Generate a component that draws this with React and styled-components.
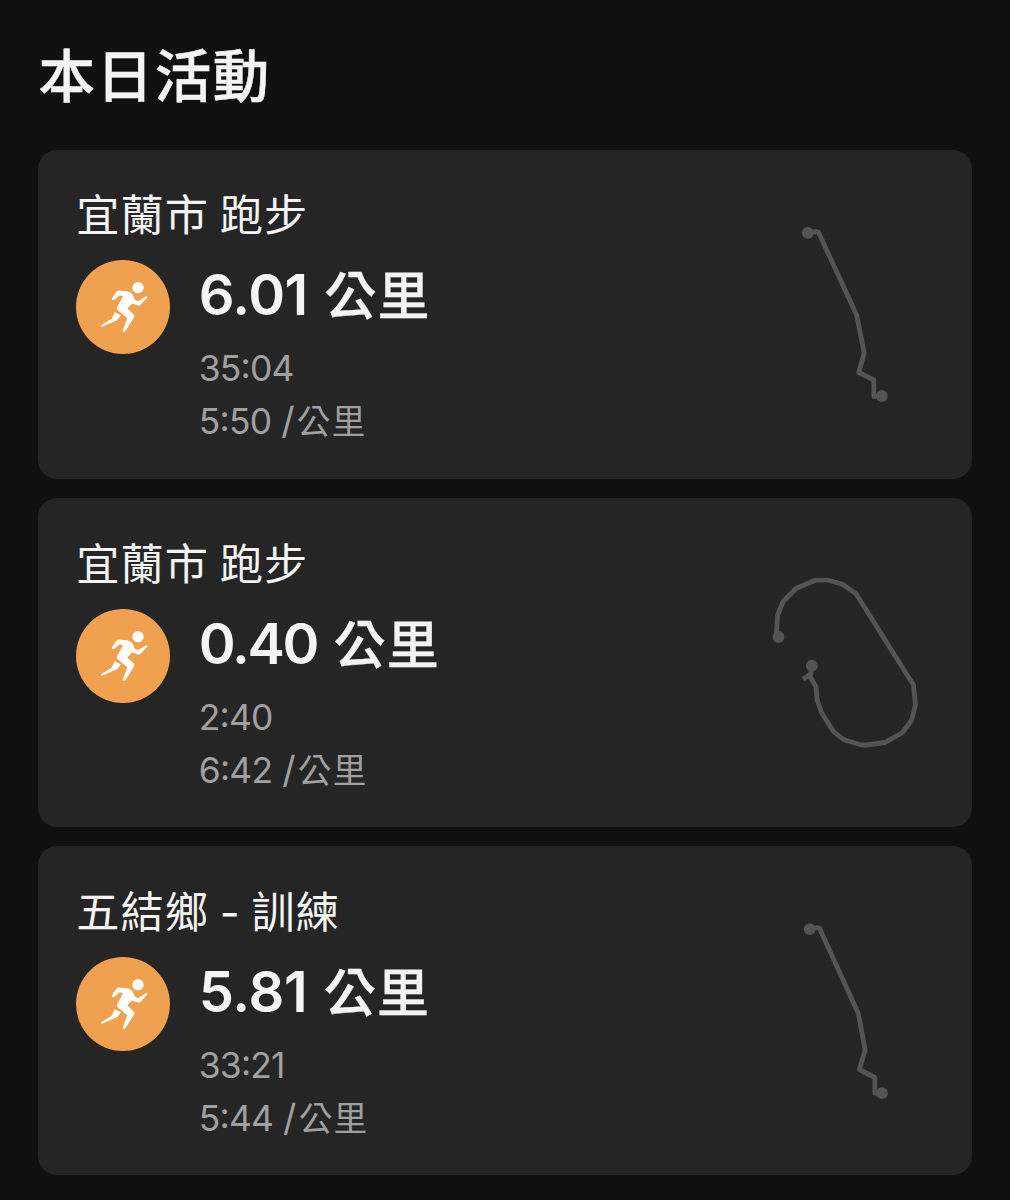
import React from "react";
import styled, { createGlobalStyle } from "styled-components";

const GlobalStyle = createGlobalStyle`
  * { box-sizing: border-box; }
  body {
    margin: 0;
    background: #101010;
    color: #f4f4f4;
    font-family: Inter, "Noto Sans CJK TC", sans-serif;
  }
`;

const Page = styled.main`
  height: 1200px;
  padding: 37px 38px 0;
  overflow: hidden;
`;

const Heading = styled.h1`
  margin: 0 0 32.8px;
  height: 80px;
  line-height: 80px;
  font-size: 56.5px;
  font-weight: 500;
  letter-spacing: 1.6px;
  text-indent: 0.5px;
  -webkit-text-stroke: 0.5px #f4f4f4;
`;

const List = styled.div`
  display: flex;
  flex-direction: column;
  gap: 19.2px;
`;

const Card = styled.article`
  display: flex;
  justify-content: space-between;
  height: 329px;
  padding: 38px 38px 0;
  border-radius: 19px;
  background: #252525;
`;

const Name = styled.h2`
  margin: 0.6px 0 17px;
  height: 55px;
  line-height: 55px;
  font-size: 43.2px;
  font-weight: 400;
  letter-spacing: 1px;
  word-spacing: -2.2px;
  text-indent: 0.3px;
  white-space: nowrap;
`;

const Summary = styled.div`
  display: flex;
  gap: 29.2px;
`;

const Badge = styled.div`
  flex: none;
  width: 94px;
  height: 94px;
  margin-left: -0.4px;
  border-radius: 50%;
  background: #f0a14f;

  svg { display: block; }
`;

const Stats = styled.div`
  display: flex;
  flex-direction: column;
  white-space: nowrap;
`;

const Distance = styled.div`
  display: flex;
  align-items: baseline;
  gap: 16.4px;
  height: 70px;
  margin-bottom: 13px;
  line-height: 70px;
  font-size: 56px;
  font-weight: 600;
`;

const Figure = styled.span`
  letter-spacing: ${(p) => p.$tracking}px;
`;

const Unit = styled.span`
  font-size: 52px;
  font-weight: 500;
  letter-spacing: 1.2px;
  -webkit-text-stroke: 0.3px #f4f4f4;
`;

const Detail = styled.div`
  display: flex;
  align-items: baseline;
  gap: 10px;
  height: 52px;
  line-height: 52px;
  font-size: 35.4px;
  letter-spacing: -0.8px;
  color: #a0a0a0;
`;

const Colon = styled.span`
  line-height: 0;
  vertical-align: 3.4px;
`;

const PaceUnit = styled.span`
  font-size: 33.6px;
  letter-spacing: 1.3px;
`;

const Slash = styled.span`
  margin-right: 1px;
  font-size: 37px;
`;

const RouteMap = styled.svg`
  flex: none;
  width: 190px;
  height: 230px;
  fill: none;
  stroke: #545454;
  stroke-width: 4.8;
  stroke-linejoin: round;

  circle { fill: #545454; stroke: none; }
`;

const activities = [
  {
    name: "宜蘭市 跑步", distance: "6.01", tracking: -0.5, time: "35:04", pace: "5:50",
    route: "63.8,44.5 72,43.5 74.5,44.3 112.8,127.5 120.2,165 114.8,184.5 129.8,192 129.8,208.5 137,208",
    ends: [[63.8, 44.8], [137.8, 208]],
  },
  {
    name: "宜蘭市 跑步", distance: "0.40", tracking: -2.3, time: "2:40", pace: "6:42",
    route: "32.3,100.8 33.5,79.5 39,65.5 52.3,52.3 71.5,44.2 84.5,44.2 98.5,48.3 112,57.8 169.5,149 171.5,169 167.5,184.5 158.5,196.5 141,206.5 123,209 117.5,209 99.5,203.5 89.5,195.5 77.5,176.5 73,163.5 72,151 65,138.5",
    spur: "59,143.3 67,137.8 67.8,130",
    ends: [[34.5, 101], [67.8, 129.6]],
  },
  {
    name: "五結鄉 - 訓練", distance: "5.81", tracking: -0.3, time: "33:21", pace: "5:44",
    route: "65.7,45 73,43.6 75.5,44.3 114.3,129.5 121.2,166 115.3,185.5 130.8,193.5 130.8,209 138,209",
    ends: [[65.7, 45.2], [138, 209.2]],
  },
];

function Runner() {
  return (
    <svg width="94" height="94" viewBox="17 15.5 282 282" fill="#fff">
      <circle cx="203" cy="98.5" r="17" />
      <path d="M124 132 L139 110 Q141 107 145 107 L170 109 Q180 111 186 118 Q190 126 193 134 L203 139 L226 125 Q232 123 231 128 L209 151 Q207 153 203 152 L185 146 L171 161 L190 179 Q194 183 191 188 L166 228 Q163 233 159 231 Q156 229 158 225 L171 190 L143 167 Q137 163 141 156 L158 124 L148 121 L132 135 Q126 138 124 132 Z" />
      <path d="M133 172 Q142 176 152 181 L144 192 Q142 195 138 197 L97 215 Q91 216 92 211 L124 192 Z" />
    </svg>
  );
}

function Duration({ value }) {
  const [minutes, seconds] = value.split(":");
  return <span>{minutes}<Colon>:</Colon>{seconds}</span>;
}

function Activity({ name, distance, tracking, time, pace, route, spur, ends }) {
  return (
    <Card>
      <div>
        <Name>{name}</Name>
        <Summary>
          <Badge><Runner /></Badge>
          <Stats>
            <Distance>
              <Figure $tracking={tracking}>{distance}</Figure>
              <Unit>公里</Unit>
            </Distance>
            <Detail><Duration value={time} /></Detail>
            <Detail>
              <Duration value={pace} />
              <PaceUnit><Slash>/</Slash>公里</PaceUnit>
            </Detail>
          </Stats>
        </Summary>
      </div>
      <RouteMap viewBox="0 0 190 230">
        <polyline points={route} />
        {spur && <polyline points={spur} />}
        {ends.map(([x, y]) => <circle key={x} cx={x} cy={y} r="5.9" />)}
      </RouteMap>
    </Card>
  );
}

export default function App() {
  return (
    <Page>
      <GlobalStyle />
      <Heading>本日活動</Heading>
      <List>
        {activities.map((item, i) => <Activity key={i} {...item} />)}
      </List>
    </Page>
  );
}
